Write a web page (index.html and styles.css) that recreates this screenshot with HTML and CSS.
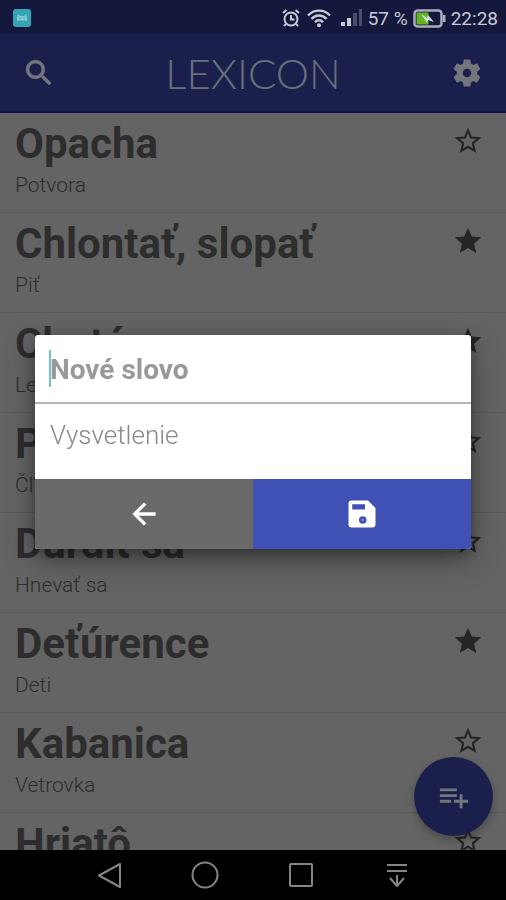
FILE: index.html
```html
<!DOCTYPE html>
<html lang="sk">
<head>
<meta charset="utf-8">
<meta name="viewport" content="width=device-width, initial-scale=1">
<title>Lexicon</title>
<link rel="stylesheet" href="styles.css">
</head>
<body>
<svg class="defs" aria-hidden="true">
  <symbol id="star" viewBox="0 0 24 24"><path d="M12 17.27 18.18 21l-1.64-7.03L22 9.24l-7.19-.61L12 2 9.19 8.63 2 9.24l5.46 4.73L5.82 21z"/></symbol>
  <symbol id="star-outline" viewBox="0 0 24 24"><path d="m22 9.24-7.19-.62L12 2 9.19 8.63 2 9.24l5.46 4.73L5.82 21 12 17.27 18.18 21l-1.63-7.03L22 9.24zM12 15.4l-3.76 2.27 1-4.28-3.32-2.88 4.38-.38L12 6.1l1.71 4.04 4.38.38-3.32 2.88 1 4.28L12 15.4z"/></symbol>
</svg>
<div class="status">
  <svg class="app-badge" viewBox="0 0 18 18"><rect width="18" height="18" rx="3" fill="#35a5b5"/><path d="M4 12V8l1-3 2 2h4l2-2 1 3v4z" fill="#83cbd3"/><path d="M7 8v2M11 8v2M5 12h8" stroke="#35a5b5" fill="none"/></svg>
  <div class="status-right">
    <svg width="20" height="20" viewBox="0 0 20 20" fill="none" stroke="currentColor" stroke-width="2"><circle cx="10" cy="11" r="6.500"/><path d="M10 7v4.500h3.500M2 5l3.500-3M18 5l-3.500-3M5 16l-2 2M15 16l2 2"/></svg>
    <svg class="wifi" width="26" height="20" viewBox="0 0 26 20" fill="none" stroke="currentColor" stroke-width="2.400"><path d="M2 7.500c6-6.500 16-6.500 22 0M5.500 11c4-4.600 11-4.600 15 0M9 14.200c2-2.600 6-2.600 8 0"/><circle cx="13" cy="17.300" r="2" fill="currentColor" stroke="none"/></svg>
    <svg class="signal" width="22" height="20" viewBox="0 0 22 20"><path fill="currentColor" d="M0 14h4v4H0zM6 10h4v8H6z"/><path fill="#4b4e69" d="M12 5h4v13h-4zM18 1h3v17h-3z"/></svg>
    <span>57 %</span>
    <svg class="battery" width="33" height="19" viewBox="0 0 33 19"><rect x="1.500" y="1.500" width="27" height="16" rx="3" fill="none" stroke="#a9aabc" stroke-width="2.500"/><path d="M30 6h2.500v7H30z" fill="#a9aabc"/><path d="M3.500 3.500h12v12h-12z" fill="#63b421"/><path d="m8 5 6 4 1-3 6 7-6-2-1 3z" fill="#d5d8dd"/></svg>
    <span>22:28</span>
  </div>
</div>
<header class="bar">
  <button class="icon-button" aria-label="Hľadať"><svg width="34" height="34" viewBox="0 0 24 24" fill="currentColor" stroke="currentColor" stroke-width=".5"><path d="M15.500 14h-.79l-.28-.27C15.410 12.590 16 11.110 16 9.500 16 5.910 13.090 3 9.500 3S3 5.910 3 9.500 5.910 16 9.500 16c1.610 0 3.090-.59 4.230-1.570l.27.28v.79l5 4.990L20.490 19l-4.990-5zm-6 0C7.010 14 5 11.990 5 9.500S7.010 5 9.500 5 14 7.010 14 9.500 11.990 14 9.500 14z"/></svg></button>
  <h1>LEXICON</h1>
  <button class="icon-button" aria-label="Nastavenia"><svg width="34" height="34" viewBox="0 0 24 24" fill="currentColor"><path d="M19.140 12.940c.04-.3.06-.61.06-.94 0-.32-.02-.64-.07-.94l2.030-1.580c.18-.14.23-.41.12-.61l-1.920-3.320c-.12-.22-.37-.29-.59-.22l-2.390.96c-.5-.38-1.030-.7-1.620-.94l-.36-2.540c-.04-.24-.24-.41-.48-.41h-3.840c-.24 0-.43.17-.47.41l-.36 2.540c-.59.24-1.130.57-1.620.94l-2.390-.96c-.22-.08-.47 0-.59.22L2.740 8.870c-.12.21-.08.47.12.61l2.030 1.580c-.05.3-.09.63-.09.94s.02.64.07.94l-2.030 1.580c-.18.14-.23.41-.12.61l1.920 3.320c.12.22.37.29.59.22l2.390-.96c.5.38 1.030.7 1.620.94l.36 2.540c.05.24.24.41.48.41h3.840c.24 0 .44-.17.47-.41l.36-2.540c.59-.24 1.130-.56 1.620-.94l2.390.96c.22.08.47 0 .59-.22l1.920-3.320c.12-.22.07-.47-.12-.61l-2.010-1.580zM12 15a3 3 0 1 1 0-6 3 3 0 0 1 0 6z"/></svg></button>
</header>
<main class="content">
  <ul class="words">
    <li><div><h2>Opacha</h2><p>Potvora</p></div><button class="star" aria-label="Obľúbené"><svg><use href="#star-outline"/></svg></button></li>
    <li><div><h2>Chlontať, slopať</h2><p>Piť</p></div><button class="star" aria-label="Obľúbené"><svg><use href="#star"/></svg></button></li>
    <li><div><h2>Chotá</h2><p>Les</p></div><button class="star" aria-label="Obľúbené"><svg><use href="#star"/></svg></button></li>
    <li><div><h2>Pľušť</h2><p>Čľapkanica</p></div><button class="star" aria-label="Obľúbené"><svg><use href="#star-outline"/></svg></button></li>
    <li><div><h2>Durdiť sa</h2><p>Hnevať sa</p></div><button class="star" aria-label="Obľúbené"><svg><use href="#star-outline"/></svg></button></li>
    <li><div><h2>Deťúrence</h2><p>Deti</p></div><button class="star" aria-label="Obľúbené"><svg><use href="#star"/></svg></button></li>
    <li><div><h2>Kabanica</h2><p>Vetrovka</p></div><button class="star" aria-label="Obľúbené"><svg><use href="#star-outline"/></svg></button></li>
    <li><div><h2>Hriatô</h2></div><button class="star" aria-label="Obľúbené"><svg><use href="#star-outline"/></svg></button></li>
  </ul>
  <button class="fab" aria-label="Pridať slovo"><svg width="34" height="34" viewBox="0 0 24 24" fill="currentColor"><path d="M14 10H2v2h12v-2zm0-4H2v2h12V6zm4 8v-4h-2v4h-4v2h4v4h2v-4h4v-2h-4zM2 16h8v-2H2v2z"/></svg></button>
</main>
<nav class="system-nav">
  <button aria-label="Späť"><svg width="28" height="28" viewBox="0 0 28 28"><path d="M25 3v23L4 14.500z"/></svg></button>
  <button aria-label="Domov"><svg width="28" height="28" viewBox="0 0 28 28"><circle cx="14" cy="14" r="12.500"/></svg></button>
  <button aria-label="Prehľad"><svg width="28" height="28" viewBox="0 0 28 28"><rect x="3" y="3" width="22" height="22" rx="1"/></svg></button>
  <button aria-label="Skryť panel"><svg width="28" height="28" viewBox="0 0 28 28"><path d="M4 4h20M4 10h20M14 14v11M7 17l7 8 7-8"/></svg></button>
</nav>
<div class="overlay">
  <form class="dialog" role="dialog" aria-label="Nové slovo">
    <div class="word-field"><input type="text" placeholder="Nové slovo" aria-label="Nové slovo"><span class="caret"></span></div>
    <input class="meaning" type="text" placeholder="Vysvetlenie" aria-label="Vysvetlenie">
    <div class="actions">
      <button type="button" class="back" aria-label="Späť"><svg width="34" height="34" viewBox="0 0 24 24" fill="currentColor" stroke="currentColor" stroke-width=".4"><path d="M20 11H7.830l5.590-5.590L12 4l-8 8 8 8 1.410-1.410L7.830 13H20z"/></svg></button>
      <button type="button" class="save" aria-label="Uložiť"><svg width="36" height="36" viewBox="0 0 24 24" fill="currentColor"><path fill-rule="evenodd" d="M5 3h11l5 5v11a2 2 0 0 1-2 2H5a2 2 0 0 1-2-2V5a2 2 0 0 1 2-2zm.5 2.500v3.500h8.500V5.500zM12.500 13.500a2.500 2.500 0 1 0 0 5 2.500 2.500 0 0 0 0-5z"/><circle cx="12.500" cy="16" r=".8" fill="#8790d0"/></svg></button>
    </div>
  </form>
</div>
</body>
</html>
```

FILE: styles.css
```css
* { box-sizing: border-box; }

body {
  margin: 0;
  height: 100vh;
  display: flex;
  flex-direction: column;
  overflow: hidden;
  background: #646464;
  color: #2d2d2d;
  font-family: Roboto, sans-serif;
}

h1, h2, p, ul { margin: 0; padding: 0; }

button {
  display: flex;
  align-items: center;
  justify-content: center;
  padding: 0;
  border: 0;
  background: none;
  color: inherit;
}

svg { display: block; flex: none; }

.defs { position: absolute; width: 0; height: 0; }

.status {
  flex: none;
  display: flex;
  align-items: center;
  justify-content: space-between;
  height: 34px;
  padding: 2px 8px 0 13px;
  background: #14183c;
  color: #c8c9d6;
  font-size: 19px;
}

.app-badge { width: 18px; height: 18px; }

.status-right { display: flex; align-items: center; gap: 5px; }
.signal { margin-left: 4px; }

.bar {
  flex: none;
  display: flex;
  align-items: center;
  justify-content: space-between;
  height: 79px;
  padding: 0 22px;
  border-bottom: 2px solid #0d1048;
  background: #1a204b;
  color: #74767c;
}

.bar h1 {
  color: #6a6f7c;
  font-family: Lato, sans-serif;
  font-size: 42px;
  font-weight: 300;
  line-height: 48px;
}

.content {
  position: relative;
  flex: 1;
  min-height: 0;
  overflow: hidden;
}

.words { list-style: none; }

.words li {
  display: flex;
  justify-content: space-between;
  height: 100px;
  padding: 6px 22px 0 15px;
  border-bottom: 1px solid #595959;
}

.words h2 {
  font-size: 42px;
  font-weight: 700;
  line-height: 50px;
}

.words p {
  margin-top: 4px;
  font-size: 21px;
  font-weight: 300;
  line-height: 24px;
}

.star { height: 32px; margin-top: 6px; }
.star svg { width: 32px; height: 32px; fill: #252525; }

.fab {
  position: absolute;
  right: 13px;
  bottom: 14px;
  width: 79px;
  height: 79px;
  border-radius: 50%;
  background: #1a204b;
  color: #74767c;
  box-shadow: 0 4px 8px #0004;
}

.system-nav {
  flex: none;
  display: flex;
  align-items: center;
  justify-content: center;
  gap: 68px;
  height: 50px;
  background: #000;
}

.system-nav svg {
  fill: none;
  stroke: #858585;
  stroke-width: 2;
  stroke-linejoin: round;
}

.overlay {
  position: fixed;
  inset: 34px 0 50px;
  display: flex;
  align-items: center;
  justify-content: center;
}

.dialog {
  width: calc(100% - 70px);
  border-radius: 3px;
  overflow: hidden;
  background: #fff;
  box-shadow: 0 10px 30px #0006, 0 6px 12px #0003;
}

.dialog input {
  display: block;
  width: 100%;
  padding: 0 15px;
  border: 0;
  outline: 0;
  background: none;
  font-family: inherit;
  font-size: 26px;
}

.dialog input::placeholder { color: #999; opacity: 1; }

.word-field { position: relative; border-bottom: 2px solid #b5b5b5; }
.dialog .word-field input { height: 67px; padding-top: 2px; font-size: 28px; font-weight: 700; }

.caret {
  position: absolute;
  top: 15px;
  left: 14px;
  width: 2px;
  height: 37px;
  background: #70c5bd;
}

.dialog .meaning { height: 75px; padding-bottom: 14px; font-weight: 300; }
.dialog .meaning::placeholder { color: #888; }

.actions { display: grid; grid-template-columns: 1fr 1fr; height: 70px; color: #fff; }
.back { background: #696969; }
.save { background: #3f51b5; }
```
